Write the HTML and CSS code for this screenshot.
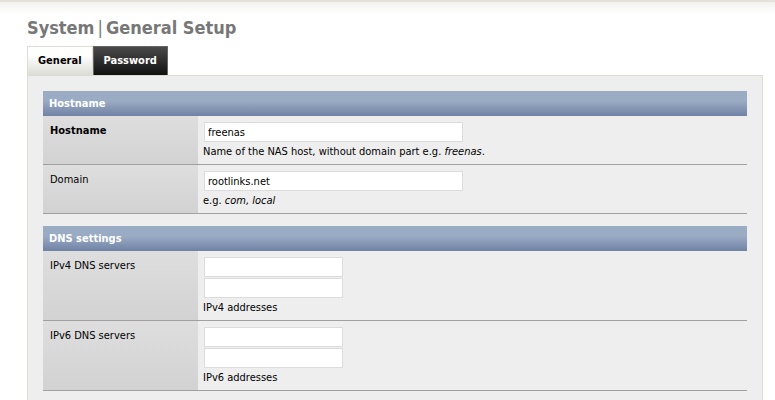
FILE: index.html
```html
<html>
<head>
    <title>System | General Setup</title>
    <link rel="stylesheet" href="styles.css">
</head>
<body>
<div class="topbar"></div>
<div class="page">
    <h1 class="pagetitle">System<span class="sep">|</span>General Setup</h1>
    <ul class="tabs">
        <li class="tab active">General</li>
        <li class="tab">Password</li>
    </ul>
    <div class="tabcont">
        <div class="section">
            <div class="listtopic">Hostname</div>
            <div class="row">
                <div class="vncellreq">Hostname</div>
                <div class="vtable">
                    <input class="formfld wide" type="text" value="freenas">
                    <div class="hint">Name of the NAS host, without domain part e.g. <em>freenas</em>.</div>
                </div>
            </div>
            <div class="row">
                <div class="vncell">Domain</div>
                <div class="vtable">
                    <input class="formfld wide" type="text" value="rootlinks.net">
                    <div class="hint">e.g. <em>com, local</em></div>
                </div>
            </div>
        </div>
        <div class="section">
            <div class="listtopic">DNS settings</div>
            <div class="row">
                <div class="vncell">IPv4 DNS servers</div>
                <div class="vtable">
                    <input class="formfld" type="text" value="">
                    <input class="formfld" type="text" value="">
                    <div class="hint">IPv4 addresses</div>
                </div>
            </div>
            <div class="row">
                <div class="vncell">IPv6 DNS servers</div>
                <div class="vtable">
                    <input class="formfld" type="text" value="">
                    <input class="formfld" type="text" value="">
                    <div class="hint">IPv6 addresses</div>
                </div>
            </div>
        </div>
    </div>
</div>
</body>
</html>
```

FILE: styles.css
```css
body {
  margin: 0;
  background: #fff;
  font-family: Tahoma, "DejaVu Sans Condensed", "Liberation Sans", sans-serif;
  font-size: 11px;
  color: #000;
}

.topbar {
  height: 12px;
  border-top: 2px solid #e2e2da;
  background: linear-gradient(to bottom, #f2f2ee, #fff);
}

.page {
  padding: 0 12px 0 27px;
}

.pagetitle {
  margin: 3px 0 0 0;
  height: 29px;
  font-size: 18px;
  font-weight: bold;
  color: #777;
}

.sep {
  padding: 0 3px;
  font-weight: normal;
}

.tabs {
  display: flex;
  list-style: none;
  margin: 0;
  padding: 0;
}

.tab {
  height: 28px;
  line-height: 28px;
  padding: 0 10px;
  font-weight: bold;
  color: #fff;
  border: 1px solid #666;
  border-bottom: 0;
  background: linear-gradient(to bottom, #4a4a4a, #111);
}

.tab.active {
  color: #000;
  border-color: #ddddd5;
  background: linear-gradient(to bottom, #fff 30%, #dcdcd6);
}

.tabcont {
  box-sizing: border-box;
  height: 326px;
  border: 1px solid #ddddd5;
  background: #eee;
  padding: 15px 15px 0 15px;
}

.section {
  margin-bottom: 12px;
}

.listtopic {
  height: 25px;
  line-height: 25px;
  padding-left: 6px;
  font-weight: bold;
  color: #fff;
  background: linear-gradient(to bottom, #9aabc4 40%, #7082a5);
}

.row {
  display: grid;
  grid-template-columns: 155px 1fr;
  border-bottom: 1px solid #a0a0a0;
}

.vncell, .vncellreq {
  padding: 7px 7px 6px 7px;
  line-height: 15px;
  background: linear-gradient(to bottom, #dedede, #d2d2d2);
}

.vncellreq {
  font-weight: bold;
}

.vtable {
  display: flex;
  flex-direction: column;
  align-items: flex-start;
  gap: 1px;
  padding: 6px 5px 5px 5px;
}

.formfld {
  box-sizing: border-box;
  width: 139px;
  height: 20px;
  margin: 0 0 0 1px;
  padding: 0 3px;
  border: 1px solid #dcdcdc;
  background: #fff;
  font-family: inherit;
  font-size: 11px;
}

.formfld.wide {
  width: 259px;
}

.hint {
  line-height: 15px;
  margin-top: 1px;
}
```
